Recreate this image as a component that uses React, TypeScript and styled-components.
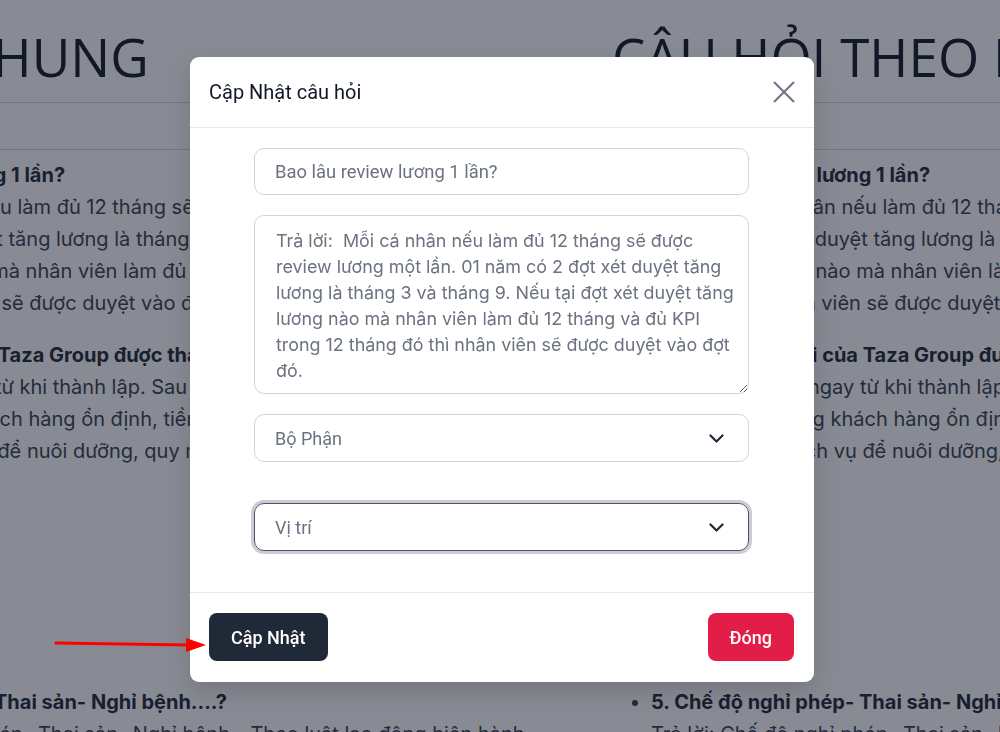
import styled, { createGlobalStyle } from 'styled-components'

const GlobalStyle = createGlobalStyle`
  html, body {
    margin: 0;
    padding: 0;
  }
  body {
    width: 1000px;
    height: 732px;
    overflow: hidden;
    background: #fff;
    font-family: Inter, 'Noto Sans', sans-serif;
  }
`

const Page = styled.div`
  display: flex;
  width: max-content;
  margin-left: -253px;
`
const Column = styled.div`
  width: 865px;
`
const Heading = styled.h2<{ $shift?: number }>`
  margin: 0;
  padding: 23px 0 11px;
  font-family: 'Open Sans', sans-serif;
  font-size: 53px;
  font-weight: 400;
  line-height: 68px;
  color: #111827;
  white-space: nowrap;
  border-bottom: 1px solid #d1d5db;
  span {
    display: inline-block;
    margin-left: ${(p) => p.$shift ?? 0}px;
  }
`
const TabBar = styled.div`
  height: 46px;
  border-bottom: 1px solid #d1d5db;
`
const List = styled.ul`
  margin: 0;
  padding: 9px 0 0 39px;
  font-size: 20px;
  line-height: 32px;
  color: #374151;
`
const Item = styled.li<{ $gap?: number }>`
  margin-top: ${(p) => p.$gap ?? 0}px;
  margin-bottom: 20px;
`
const Question = styled.div`
  font-weight: 700;
  color: #1f2937;
  white-space: nowrap;
`
const Line = styled.div`
  white-space: nowrap;
`

const Overlay = styled.div`
  position: fixed;
  inset: 0;
  background: rgba(17, 24, 39, 0.5);
  display: flex;
  justify-content: center;
  align-items: flex-start;
  padding: 57px 0 0 4px;
  box-sizing: border-box;
`
const Modal = styled.div`
  width: 624px;
  background: #fff;
  border-radius: 9px;
  box-shadow: 0 10px 25px rgba(0, 0, 0, 0.15);
  font-family: Roboto, 'Liberation Sans', sans-serif;
`
const Header = styled.div`
  height: 70px;
  display: flex;
  align-items: center;
  justify-content: space-between;
  padding: 0 19px;
  border-bottom: 1px solid #e5e7eb;
`
const Title = styled.h3`
  margin: 0;
  font-size: 20px;
  font-weight: 400;
  color: #111827;
`
const CloseButton = styled.button`
  border: none;
  background: none;
  padding: 0;
  width: 22px;
  height: 22px;
  display: flex;
  color: #6b7280;
  cursor: pointer;
`
const Body = styled.div`
  padding: 20px 65px 41px 64px;
  display: flex;
  flex-direction: column;
  gap: 20px;
  border-bottom: 1px solid #e5e7eb;
`
const TextInput = styled.input`
  box-sizing: border-box;
  width: 100%;
  height: 47px;
  padding: 0 20px;
  border: 1px solid #d1d5db;
  border-radius: 10px;
  font-family: Roboto, 'Liberation Sans', sans-serif;
  font-size: 18.4px;
  color: #6b7280;
  outline: none;
`
const TextArea = styled.textarea`
  box-sizing: border-box;
  width: 100%;
  height: 179px;
  padding: 12px 3px 8px 21px;
  border: 1px solid #d1d5db;
  border-radius: 10px;
  font-family: Inter, 'Noto Sans', sans-serif;
  font-size: 17.9px;
  line-height: 26px;
  color: #6b7280;
  overflow: hidden;
  outline: none;
`
const SelectBox = styled.div<{ $focused?: boolean; $spaced?: boolean }>`
  box-sizing: border-box;
  height: 48px;
  margin-top: ${(p) => (p.$spaced ? '21px' : '0')};
  padding: 0 24px 0 20px;
  display: flex;
  align-items: center;
  justify-content: space-between;
  border: 1px solid ${(p) => (p.$focused ? '#475569' : '#d1d5db')};
  border-radius: 10px;
  box-shadow: ${(p) => (p.$focused ? '0 0 0 3px #cbcdd2' : 'none')};
  font-size: 18px;
  color: #6b7280;
`
const Footer = styled.div`
  padding: 20px 20px 21px 19px;
  display: flex;
  justify-content: space-between;
`
const Button = styled.button<{ $variant: 'dark' | 'danger' }>`
  height: 48px;
  padding: 0 22px;
  border: none;
  border-radius: 8px;
  font-family: Roboto, 'Liberation Sans', sans-serif;
  font-size: 18px;
  font-weight: 500;
  color: #fff;
  background: ${(p) => (p.$variant === 'dark' ? '#1f2937' : '#e11d48')};
  cursor: pointer;
`
const Arrow = styled.svg`
  position: absolute;
  left: 54px;
  top: 636px;
`

const Chevron = () => (
  <svg width='15' height='9' viewBox='0 0 15 9'>
    <polyline points='1.5,1.5 7.5,7.5 13.5,1.5' fill='none' stroke='#1f2937' strokeWidth='2.2' strokeLinecap='round' strokeLinejoin='round' />
  </svg>
)

const faq = [
  {
    q: '1. Bao lâu review lương 1 lần?',
    lines: [
      'Trả lời: Mỗi cá nhân nếu làm đủ 12 tháng sẽ được review lương một lần. 01',
      'năm có 2 đợt xét duyệt tăng lương là tháng 3 và tháng 9. Nếu tại đợt xét',
      'duyệt tăng lương nào mà nhân viên làm đủ 12 tháng và đủ KPI trong 12',
      'tháng đó thì nhân viên sẽ được duyệt vào đợt đó.'
    ]
  },
  {
    q: '2. Văn hóa cốt lõi của Taza Group được thành lập như thế nào?',
    lines: [
      'Trả lời: Xác định ngay từ khi thành lập. Sau khi có được một',
      'Taza có một lượng khách hàng ổn định, tiềm năng, Taza tập trung',
      'nên phát triển dịch vụ để nuôi dưỡng, quy mô và chất lượng.'
    ]
  },
  {
    q: '5. Chế độ nghỉ phép- Thai sản- Nghỉ bệnh....?',
    lines: ['Trả lời: Chế độ nghỉ phép- Thai sản- Nghỉ bệnh - Theo luật lao động hiện hành.'],
    gap: 219
  }
]

function FaqColumn({ title, shift }: { title: string; shift?: number }) {
  return (
    <Column>
      <Heading $shift={shift}>
        <span>{title}</span>
      </Heading>
      <TabBar />
      <List>
        {faq.map((item) => (
          <Item key={item.q} $gap={item.gap}>
            <Question>{item.q}</Question>
            {item.lines.map((l) => (
              <Line key={l}>{l}</Line>
            ))}
          </Item>
        ))}
      </List>
    </Column>
  )
}

const answer =
  'Trả lời:  Mỗi cá nhân nếu làm đủ 12 tháng sẽ được review lương một lần. 01 năm có 2 đợt xét duyệt tăng lương là tháng 3 và tháng 9. Nếu tại đợt xét duyệt tăng lương nào mà nhân viên làm đủ 12 tháng và đủ KPI trong 12 tháng đó thì nhân viên sẽ được duyệt vào đợt đó.'

export default function App() {
  return (
    <>
      <GlobalStyle />
      <Page>
        <FaqColumn title='CÂU HỎI CHUNG' shift={-16} />
        <FaqColumn title='CÂU HỎI THEO BỘ PHẬN' />
      </Page>
      <Overlay>
        <Modal>
          <Header>
            <Title>Cập Nhật câu hỏi</Title>
            <CloseButton aria-label='close'>
              <svg width='22' height='22' viewBox='0 0 22 22'>
                <path d='M1 1 L21 21 M21 1 L1 21' stroke='currentColor' strokeWidth='2' />
              </svg>
            </CloseButton>
          </Header>
          <Body>
            <TextInput defaultValue='Bao lâu review lương 1 lần?' />
            <TextArea defaultValue={answer} />
            <SelectBox>
              <span>Bộ Phận</span>
              <Chevron />
            </SelectBox>
            <SelectBox $focused $spaced>
              <span>Vị trí</span>
              <Chevron />
            </SelectBox>
          </Body>
          <Footer>
            <Button $variant='dark'>Cập Nhật</Button>
            <Button $variant='danger'>Đóng</Button>
          </Footer>
        </Modal>
        <Arrow width='154' height='18' viewBox='0 0 154 18'>
          <line x1='2' y1='7' x2='134' y2='9' stroke='#ff0000' strokeWidth='3' strokeLinecap='round' />
          <polygon points='132,2 152,9 132,16' fill='#ff0000' />
        </Arrow>
      </Overlay>
    </>
  )
}
